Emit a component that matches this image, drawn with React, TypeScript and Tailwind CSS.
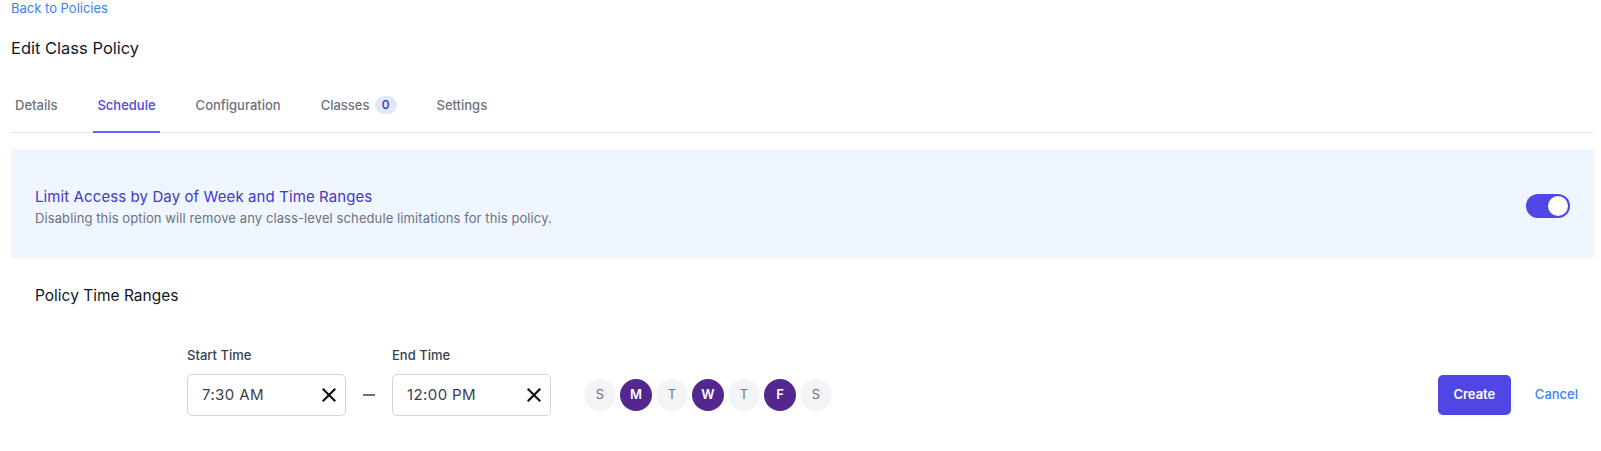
import * as React from "react";

/* ── Tabs ─────────────────────────────────────────────── */
const TABS = [
  { label: "Details" },
  { label: "Schedule", active: true },
  { label: "Configuration" },
  { label: "Classes", badge: 0 },
  { label: "Settings" },
];

const DAYS = [
  { d: "S", on: false },
  { d: "M", on: true },
  { d: "T", on: false },
  { d: "W", on: true },
  { d: "T", on: false },
  { d: "F", on: true },
  { d: "S", on: false },
];

function ClearIcon() {
  return (
    <svg width="14" height="14" viewBox="0 0 14 14" aria-hidden="true">
      <path d="M1.5 1.5 L12.5 12.5 M12.5 1.5 L1.5 12.5" stroke="#111" strokeWidth="2.2" strokeLinecap="square" />
    </svg>
  );
}

function TimeField({ label, value }: { label: string; value: string }) {
  return (
    <div className="flex flex-col">
      <span className="text-[13px] leading-[16px] font-medium text-[#374151] mb-[11px]">{label}</span>
      <div className="w-[159px] h-[42px] rounded-[5px] border border-[#d1d5db] flex items-center justify-between pl-[14px] pr-[9px] bg-white">
        <span className="text-[15px] text-[#374151] tracking-[0.4px]">{value}</span>
        <ClearIcon />
      </div>
    </div>
  );
}

export default function App() {
  const [enabled, setEnabled] = React.useState(true);

  return (
    <div
      className="w-[1601px] h-[451px] bg-white pl-[11px] pr-[7px] overflow-hidden"
      style={{ fontFamily: "Inter, 'Noto Sans', sans-serif" }}
    >
      {/* Header */}
      <a className="block text-[13px] leading-[16px] text-[#3b82f6]">Back to Policies</a>
      <h1 className="mt-[22px] text-[16.5px] leading-[20px] text-[#111827]">Edit Class Policy</h1>

      {/* Tabs */}
      <nav className="mt-[37px] flex border-b border-[#e5e7eb] h-[38px]">
        {TABS.map((t, i) => (
          <div
            key={t.label}
            className={
              "flex items-start gap-[5px] px-[4px] pt-[1px] text-[13px] font-medium -mb-px " +
              (i === 0 ? "ml-0 " : "ml-[32px] ") +
              (t.active
                ? "text-[#4f46e5] border-b-2 border-[#6366f1]"
                : "text-[#6b7280] border-b-2 border-transparent")
            }
          >
            <span className="leading-[16px] mt-[1px]">{t.label}</span>
            {t.badge !== undefined && (
              <span className="h-[18px] min-w-[22px] px-[6px] rounded-full bg-[#e0e7ff] text-[#3730a3] text-[12px] leading-[18px] text-center">
                {t.badge}
              </span>
            )}
          </div>
        ))}
      </nav>

      {/* Schedule toggle panel */}
      <section className="mt-[16px] h-[109px] bg-[#eff6ff] flex items-center justify-between pl-[24px] pr-[24px]">
        <div className="pt-[6px]">
          <h2 className="text-[15px] leading-[20px] text-[#4338ca] tracking-[0.1px]">
            Limit Access by Day of Week and Time Ranges
          </h2>
          <p className="text-[13px] leading-[18px] text-[#6b7280] mt-[2px] tracking-[0.1px]">
            Disabling this option will remove any class-level schedule limitations for this policy.
          </p>
        </div>
        <button
          type="button"
          onClick={() => setEnabled((v) => !v)}
          className={
            "relative w-[44px] h-[24px] rounded-full mt-[4px] " + (enabled ? "bg-[#4f46e5]" : "bg-[#e5e7eb]")
          }
          aria-pressed={enabled}
        >
          <span
            className={
              "absolute top-[2px] w-[20px] h-[20px] rounded-full bg-white " + (enabled ? "right-[2px]" : "left-[2px]")
            }
          />
        </button>
      </section>

      {/* Policy Time Ranges */}
      <h3 className="mt-[28px] pl-[24px] text-[15.5px] leading-[20px] text-[#111827]">Policy Time Ranges</h3>

      <div className="mt-[41px] pl-[176px] pr-[16px] flex items-end">
        <TimeField label="Start Time" value="7:30 AM" />
        <span className="w-[46px] h-[42px] flex items-center justify-center">
          <span className="block w-[12px] h-[1.5px] bg-[#6b7280]" />
        </span>
        <TimeField label="End Time" value="12:00 PM" />

        <div className="ml-[33px] h-[42px] flex items-center gap-[4px]">
          {DAYS.map((day, i) => (
            <span
              key={i}
              className={
                "w-[32px] h-[32px] rounded-full flex items-center justify-center text-[13px] " +
                (day.on ? "bg-[#54278f] text-white font-semibold" : "bg-[#f3f4f6] text-[#6b7280]")
              }
            >
              {day.d}
            </span>
          ))}
        </div>

        <div className="ml-auto h-[42px] flex items-center">
          <button
            type="button"
            className="w-[73px] h-[40px] rounded-[5px] bg-[#4f46e5] text-white text-[13px] font-semibold"
          >
            Create
          </button>
          <button type="button" className="ml-[24px] text-[13px] font-medium text-[#3b82f6]">
            Cancel
          </button>
        </div>
      </div>
    </div>
  );
}
